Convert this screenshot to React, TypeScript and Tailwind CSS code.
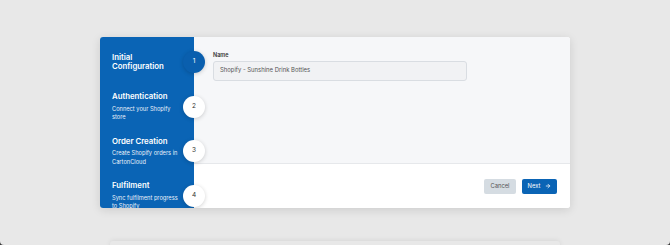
import { ArrowRight } from 'lucide-react';

const steps = [
  { n: 1, title: ['Initial', 'Configuration'], sub: [] as string[], active: true },
  { n: 2, title: ['Authentication'], sub: ['Connect your Shopify', 'store'], active: false },
  { n: 3, title: ['Order Creation'], sub: ['Create Shopify orders in', 'CartonCloud'], active: false },
  { n: 4, title: ['Fulfilment'], sub: ['Sync fulfilment progress', 'to Shopify'], active: false },
];

function Step({ n, title, sub, active }: { n: number; title: string[]; sub: string[]; active: boolean }) {
  return (
    <div className="relative flex h-[44.5px] shrink-0 flex-col justify-center pl-3 pr-4">
      <div className="text-[7.8px] font-semibold leading-[9.5px] text-white">
        {title.map((t) => (
          <div key={t}>{t}</div>
        ))}
      </div>
      {sub.length > 0 && (
        <div className="mt-[3px] text-[5.7px] leading-[8.5px] text-[#e8f0f9]">
          {sub.map((s) => (
            <div key={s} className="whitespace-nowrap">{s}</div>
          ))}
        </div>
      )}
      <div
        className={
          'absolute right-[-11px] top-1/2 z-10 flex h-[22px] w-[22px] -translate-y-1/2 items-center justify-center rounded-full text-[6.5px] shadow-[0_1px_4px_rgba(0,0,0,0.18)] ' +
          (active ? 'bg-[#0a5fae] text-white' : 'bg-white text-[#333]')
        }
      >
        {n}
      </div>
    </div>
  );
}

export default function App() {
  return (
    <div className="h-[245px] w-[670px] overflow-hidden bg-[#3a3a3a]" style={{ fontFamily: 'Inter, "Noto Sans", sans-serif' }}>
      <div className="flex h-full w-full flex-col items-center overflow-hidden rounded-b-[4px] bg-[#e8e8e8] pt-[37px]">
        <div className="flex h-[171px] w-[470px] shrink-0 overflow-hidden rounded-[3px] bg-white shadow-[0_2px_10px_rgba(0,0,0,0.12)]">
          <div className="relative z-10 flex w-[94px] shrink-0 flex-col overflow-visible bg-[#0a64b5] pt-[3px]">
            {steps.map((s) => (
              <Step key={s.n} {...s} />
            ))}
          </div>
          <div className="flex flex-1 flex-col">
            <div className="flex-1 bg-[#f6f7f9] pl-[19px] pt-[14px]">
              <div className="text-[5.5px] font-semibold leading-[8px] text-[#333]">Name</div>
              <div className="mt-[1.5px] flex h-[20px] w-[254px] items-center rounded-[3px] border border-[#d9dde2] bg-[#f1f2f4] pl-[6px] text-[5.9px] text-[#555]">
                Shopify - Sunshine Drink Bottles
              </div>
            </div>
            <div className="flex h-[45px] items-center justify-end gap-[6px] border-t border-[#e6e8eb] bg-white pr-[13px]">
              <button className="flex h-[15px] w-[32px] items-center justify-center rounded-[2px] bg-[#d5dce2] text-[5.8px] text-[#555]">
                Cancel
              </button>
              <button className="flex h-[15px] w-[35px] items-center justify-center gap-[5px] rounded-[2px] bg-[#0a64b5] text-[5.8px] text-white">
                Next
                <ArrowRight className="h-[6px] w-[6px]" strokeWidth={3} />
              </button>
            </div>
          </div>
        </div>
        <div className="mt-[33px] h-[20px] w-[450px] shrink-0 rounded-[3px] bg-[#e8e8e8] shadow-[0_-1px_5px_rgba(0,0,0,0.07)]" />
      </div>
    </div>
  );
}
